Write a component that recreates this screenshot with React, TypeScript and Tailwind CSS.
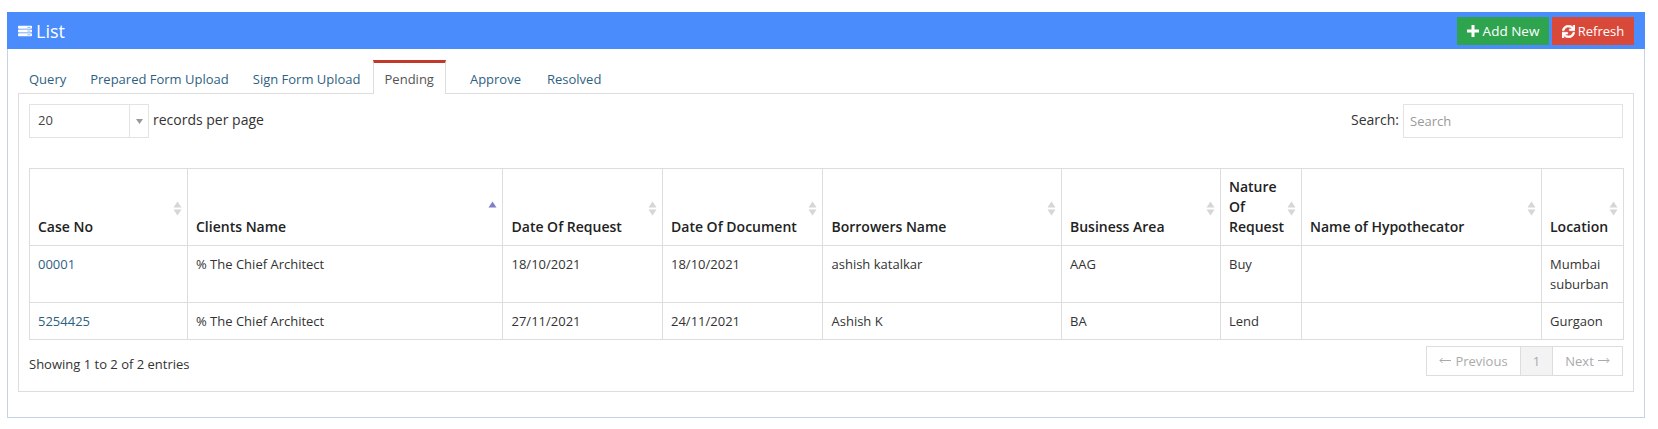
import { FaServer, FaSync } from "react-icons/fa";

const columns = [
    { label: "Case No", width: "w-[158px]", pad: "pl-[8px]" },
    { label: "Clients Name", width: "w-[315px]", pad: "pl-[8px]", sorted: true },
    { label: "Date Of Request", width: "w-[160px]", pad: "pl-[8.5px]" },
    { label: "Date Of Document", width: "w-[160px]", pad: "pl-[8px]" },
    { label: "Borrowers Name", width: "w-[239px]", pad: "pl-[8.5px]" },
    { label: "Business Area", width: "w-[159px]", pad: "pl-[8px]" },
    { label: "Nature Of Request", width: "w-[81px]", pad: "pl-[8px]" },
    { label: "Name of Hypothecator", width: "w-[240px]", pad: "pl-[8px]" },
    { label: "Location", width: "w-[82px]", pad: "pl-[8px]" },
];

const rows = [
    ["00001", "% The Chief Architect", "18/10/2021", "18/10/2021", "ashish katalkar", "AAG", "Buy", "", "Mumbai suburban"],
    ["5254425", "% The Chief Architect", "27/11/2021", "24/11/2021", "Ashish K", "BA", "Lend", "", "Gurgaon"],
];

const SortIcon = ({ sorted }: { sorted?: boolean }) => (
    <svg width="9" height="15" viewBox="0 0 9 15" className="absolute right-[5px] top-[32px]">
        <path d="M4.5 0.5 L8.5 6.5 L0.5 6.5 Z" fill={sorted ? "#7f7fc8" : "#d6d6d6"} />
        {!sorted && <path d="M4.5 14.5 L8.5 8.5 L0.5 8.5 Z" fill="#d6d6d6" />}
    </svg>
);

const App = () => {
    return (
        <div className="h-[429px] bg-white pt-3 pl-[7px] font-['Open_Sans',sans-serif] text-[13px] leading-5 text-[#333]">
            <div className="h-[406px] w-[1638px] border border-t-0 border-[#c5d3e6]">
                <div className="-mr-px -ml-px flex h-[37px] items-center justify-between bg-[#4a8cfb] pr-[11px] pl-[11px] text-white">
                    <div className="flex items-center gap-[4px] text-[18px]">
                        <FaServer className="h-[12px] w-[14px]" preserveAspectRatio="none" />
                        <span>List</span>
                    </div>
                    <div className="flex gap-[3px] self-start pt-[5px]">
                        <button className="flex h-[28px] w-[92px] items-center justify-center gap-[4px] bg-[#2fa44f] text-[13.5px] text-white">
                            <svg width="12" height="12" viewBox="0 0 12 12"><path d="M4.5 0 H7.5 V4.5 H12 V7.5 H7.5 V12 H4.5 V7.5 H0 V4.5 H4.5 Z" fill="white" /></svg>
                            Add New
                        </button>
                        <button className="flex h-[28px] w-[82px] items-center justify-center gap-[3px] bg-[#d9493a] text-[13px] text-white">
                            <FaSync className="h-[13px] w-[13px] stroke-white stroke-[25]" />
                            Refresh
                        </button>
                    </div>
                </div>
                <div className="pt-[11px] pr-[10px] pl-[10px]">
                    <div className="relative z-10 -mb-px flex h-[34px] items-end text-[#2f5f82]">
                        <a className="flex h-[31px] items-center pr-3 pl-[11px]">Query</a>
                        <a className="flex h-[31px] items-center px-3">Prepared Form Upload</a>
                        <a className="flex h-[31px] items-center px-3">Sign Form Upload</a>
                        <a className="flex h-[34px] items-center border-x border-t-[3px] border-x-[#ddd] border-t-[#c0392b] bg-white px-[11px] text-[#555]">Pending</a>
                        <a className="ml-3 flex h-[31px] items-center px-3">Approve</a>
                        <a className="ml-[2px] flex h-[31px] items-center px-3">Resolved</a>
                    </div>
                    <div className="h-[299px] border border-[#ddd] px-[10px] pt-[10px]">
                        <div className="flex h-[34px] items-center justify-between">
                            <div className="flex items-center gap-[4px]">
                                <div className="flex h-[34px] w-[120px] items-center border border-[#e3e3e3]">
                                    <span className="flex-1 pb-[2px] pl-2 text-[#444]">20</span>
                                    <span className="flex h-full w-[19px] items-center justify-center border-l border-[#e3e3e3]">
                                        <svg width="7" height="5" viewBox="0 0 7 5"><path d="M0 0 H7 L3.5 5 Z" fill="#999" /></svg>
                                    </span>
                                </div>
                                <span className="pb-[2px] text-[14px]">records per page</span>
                            </div>
                            <div className="flex items-center gap-[4px]">
                                <span className="pb-[2px] text-[14px]">Search:</span>
                                <input
                                    placeholder="Search"
                                    className="h-[34px] w-[220px] border border-[#e3e3e3] px-[6px] text-[13px] outline-none placeholder:text-[#999]"
                                />
                            </div>
                        </div>
                        <table className="mt-[30px] w-[1595px] table-fixed border-collapse border border-[#ddd]">
                            <thead>
                                <tr>
                                    {columns.map((col) => (
                                        <th
                                            key={col.label}
                                            className={`${col.width} ${col.pad} relative h-[77px] border border-[#ddd] py-[8px] pr-[8px] text-left align-bottom text-[14px] leading-5 font-semibold text-[#222]`}
                                        >
                                            {col.label}
                                            <SortIcon sorted={col.sorted} />
                                        </th>
                                    ))}
                                </tr>
                            </thead>
                            <tbody>
                                {rows.map((row) => (
                                    <tr key={row[0]}>
                                        {row.map((cell, i) => (
                                            <td key={i} className={`${columns[i].pad} border border-[#ddd] py-[8px] pr-[8px] align-top`}>
                                                {i === 0 ? <a className="text-[#2f5f82]">{cell}</a> : cell}
                                            </td>
                                        ))}
                                    </tr>
                                ))}
                            </tbody>
                        </table>
                        <div className="flex items-start justify-between pt-[6px]">
                            <span className="pt-[8px]">Showing 1 to 2 of 2 entries</span>
                            <div className="flex h-[30px] border border-[#ddd] text-[13px] text-[#aaa]">
                                <span className="flex w-[93px] items-center justify-center gap-[4px] pb-[1px]">
                                    <svg width="12" height="7" viewBox="0 0 12 7"><path d="M12 3.5 H1 M3.5 1 L1 3.5 L3.5 6" fill="none" stroke="#aaa" /></svg>
                                    Previous
                                </span>
                                <span className="flex w-[33px] items-center justify-center border-x border-[#ddd] bg-[#f3f3f3] pb-[1px]">1</span>
                                <span className="flex w-[69px] items-center justify-center gap-[4px] pb-[1px]">
                                    Next
                                    <svg width="12" height="7" viewBox="0 0 12 7"><path d="M0 3.5 H11 M8.5 1 L11 3.5 L8.5 6" fill="none" stroke="#aaa" /></svg>
                                </span>
                            </div>
                        </div>
                    </div>
                </div>
            </div>
        </div>
    );
};

export default App;
